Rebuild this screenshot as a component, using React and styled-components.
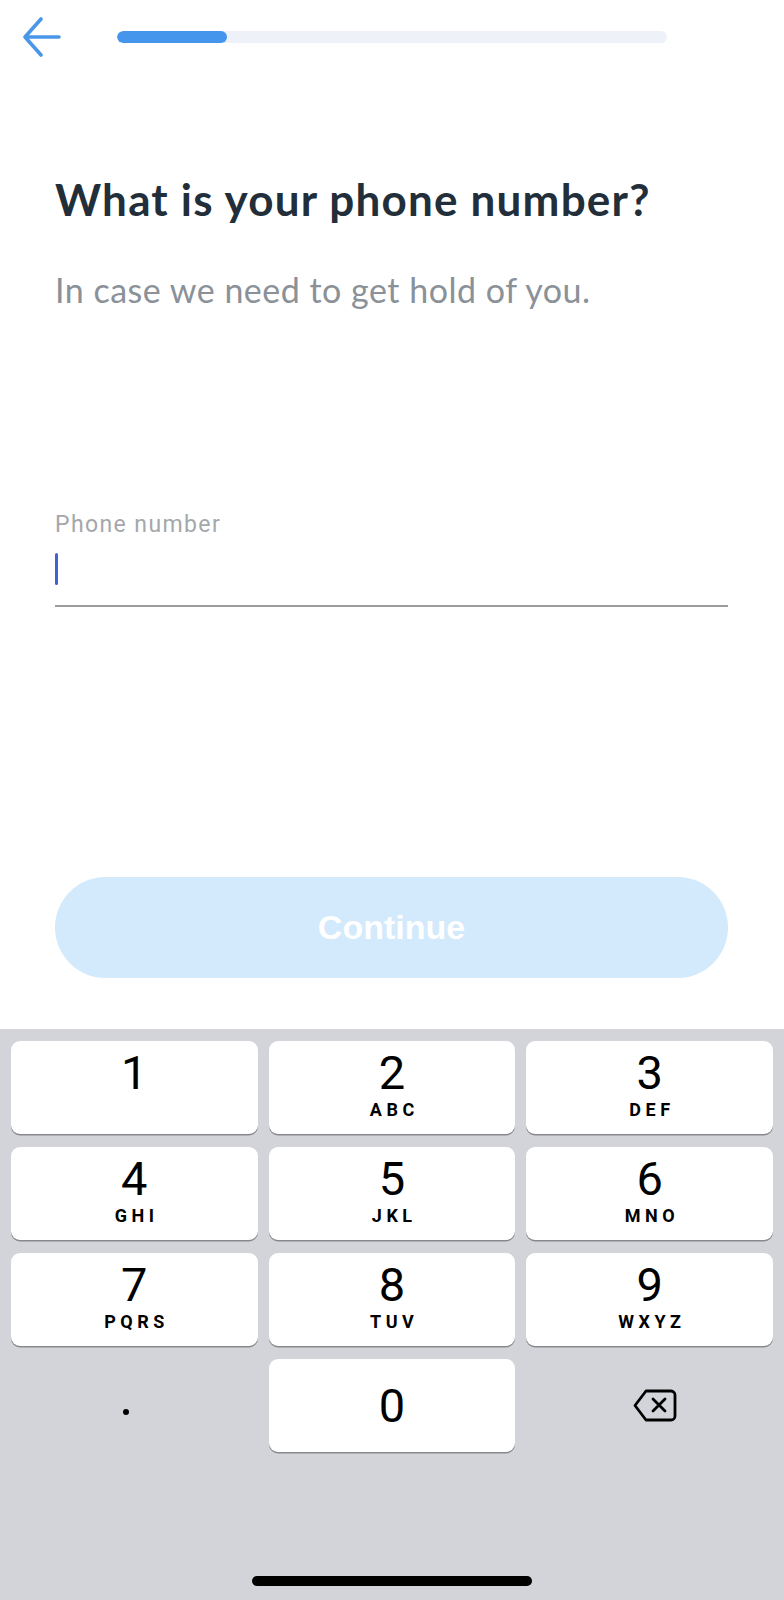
import React from 'react'
import styled, { createGlobalStyle } from 'styled-components'

const GlobalStyle = createGlobalStyle`
  html, body {
    margin: 0;
    padding: 0;
    background: #ffffff;
  }
  * {
    box-sizing: border-box;
  }
`

const Screen = styled.div`
  width: 784px;
  height: 1600px;
  display: flex;
  flex-direction: column;
  overflow: hidden;
  background: #ffffff;
`

const TopBar = styled.div`
  height: 74px;
  display: flex;
  align-items: center;
  padding: 0 0 0 19px;
`

const BackButton = styled.button`
  width: 44px;
  height: 44px;
  padding: 0;
  border: none;
  background: none;
  display: flex;
  align-items: center;
  justify-content: center;
  cursor: pointer;
`

const Track = styled.div`
  margin-left: 54px;
  width: 550px;
  height: 12px;
  border-radius: 6px;
  background: #eef2f8;
  overflow: hidden;
`

const Fill = styled.div`
  height: 100%;
  border-radius: 6px;
  background: #4695ec;
`

const Content = styled.div`
  flex: 1;
  display: flex;
  flex-direction: column;
  padding: 0 56px 0 55px;
`

const Title = styled.h1`
  margin: 100px 0 0;
  font-family: Lato, "Noto Sans", sans-serif;
  font-weight: 700;
  font-size: 44px;
  line-height: 50px;
  letter-spacing: 1.2px;
  color: #222f3a;
`

const Subtitle = styled.p`
  margin: 46px 0 0;
  font-family: Lato, "Noto Sans", sans-serif;
  font-weight: 400;
  font-size: 34px;
  line-height: 40px;
  letter-spacing: 0.5px;
  color: #8a9198;
`

const Field = styled.div`
  margin-top: 201px;
  display: flex;
  flex-direction: column;
`

const Label = styled.label`
  font-family: Roboto, "Liberation Sans", sans-serif;
  font-size: 23px;
  line-height: 28px;
  letter-spacing: 1.4px;
  color: #a4a7ab;
`

const InputRow = styled.div`
  height: 68px;
  display: flex;
  align-items: center;
  border-bottom: 2px solid #9c9c9c;
`

const Caret = styled.span`
  width: 3px;
  height: 32px;
  border-radius: 2px;
  background: #4460d4;
  margin-top: -7px;
`

const ContinueButton = styled.button`
  margin-top: 270px;
  width: 100%;
  height: 101px;
  border: none;
  border-radius: 51px;
  background: #d3e9fc;
  color: #ffffff;
  font-family: "Liberation Sans", Arial, sans-serif;
  font-weight: 700;
  font-size: 34px;
  cursor: default;
`

const Keyboard = styled.div`
  height: 571px;
  background: #d3d4d9;
  padding: 12px 11px 0;
  display: flex;
  flex-direction: column;
`

const KeyGrid = styled.div`
  display: grid;
  grid-template-columns: repeat(3, 1fr);
  grid-auto-rows: 93px;
  column-gap: 11px;
  row-gap: 13px;
`

const Key = styled.div`
  border-radius: 9px;
  background: ${p => (p.$plain ? 'transparent' : '#ffffff')};
  box-shadow: ${p => (p.$plain ? 'none' : '0 1.5px 0 #88898c')};
  display: flex;
  flex-direction: column;
  align-items: center;
  justify-content: ${p => (p.$center ? 'center' : 'flex-start')};
  padding-top: ${p => (p.$center ? '0' : '7px')};
  color: #000000;
`

const Digit = styled.span`
  font-family: Roboto, "Liberation Sans", sans-serif;
  font-weight: 400;
  font-size: 47px;
  line-height: 50px;
`

const Letters = styled.span`
  font-family: Roboto, "Liberation Sans", sans-serif;
  font-weight: 700;
  font-size: 18px;
  line-height: 20px;
  letter-spacing: 4.5px;
  margin-left: 4.5px;
  margin-top: 2px;
`

const Dot = styled.span`
  width: 6px;
  height: 6px;
  border-radius: 50%;
  background: #000;
  margin-top: 12px;
  margin-left: -16px;
`

const BackspaceWrap = styled.span`
  display: flex;
  margin-left: 10px;
`

const HomeBar = styled.div`
  margin: auto auto 14px;
  width: 280px;
  height: 10px;
  border-radius: 5px;
  background: #000000;
`

const keys = [
  ['1', ''],
  ['2', 'ABC'],
  ['3', 'DEF'],
  ['4', 'GHI'],
  ['5', 'JKL'],
  ['6', 'MNO'],
  ['7', 'PQRS'],
  ['8', 'TUV'],
  ['9', 'WXYZ'],
]

const ArrowLeft = () => (
  <svg width="40" height="40" viewBox="0 0 40 40" fill="none">
    <path
      d="M38 20H4M20 2L4 20L20 38"
      stroke="#4a97e8"
      strokeWidth="3.6"
      strokeLinecap="round"
      strokeLinejoin="round"
    />
  </svg>
)

const Backspace = () => (
  <svg width="44" height="33" viewBox="0 0 44 33" fill="none">
    <path
      d="M13 2H38a4 4 0 0 1 4 4v21a4 4 0 0 1-4 4H13L2 16.5Z"
      stroke="#000"
      strokeWidth="2.8"
      strokeLinejoin="round"
    />
    <path
      d="M20 10L32 22M32 10L20 22"
      stroke="#000"
      strokeWidth="2.8"
      strokeLinecap="round"
    />
  </svg>
)

export default function App() {
  return (
    <Screen>
      <GlobalStyle />
      <TopBar>
        <BackButton aria-label="Back">
          <ArrowLeft />
        </BackButton>
        <Track>
          <Fill style={{ width: `${(110 / 550) * 100}%` }} />
        </Track>
      </TopBar>

      <Content>
        <Title>What is your phone number?</Title>
        <Subtitle>In case we need to get hold of you.</Subtitle>
        <Field>
          <Label>Phone number</Label>
          <InputRow>
            <Caret />
          </InputRow>
        </Field>
        <ContinueButton>Continue</ContinueButton>
      </Content>

      <Keyboard>
        <KeyGrid>
          {keys.map(([d, l]) => (
            <Key key={d}>
              <Digit>{d}</Digit>
              {l && <Letters>{l}</Letters>}
            </Key>
          ))}
          <Key $plain $center>
            <Dot />
          </Key>
          <Key $center>
            <Digit>0</Digit>
          </Key>
          <Key $plain $center>
            <BackspaceWrap>
              <Backspace />
            </BackspaceWrap>
          </Key>
        </KeyGrid>
        <HomeBar />
      </Keyboard>
    </Screen>
  )
}
